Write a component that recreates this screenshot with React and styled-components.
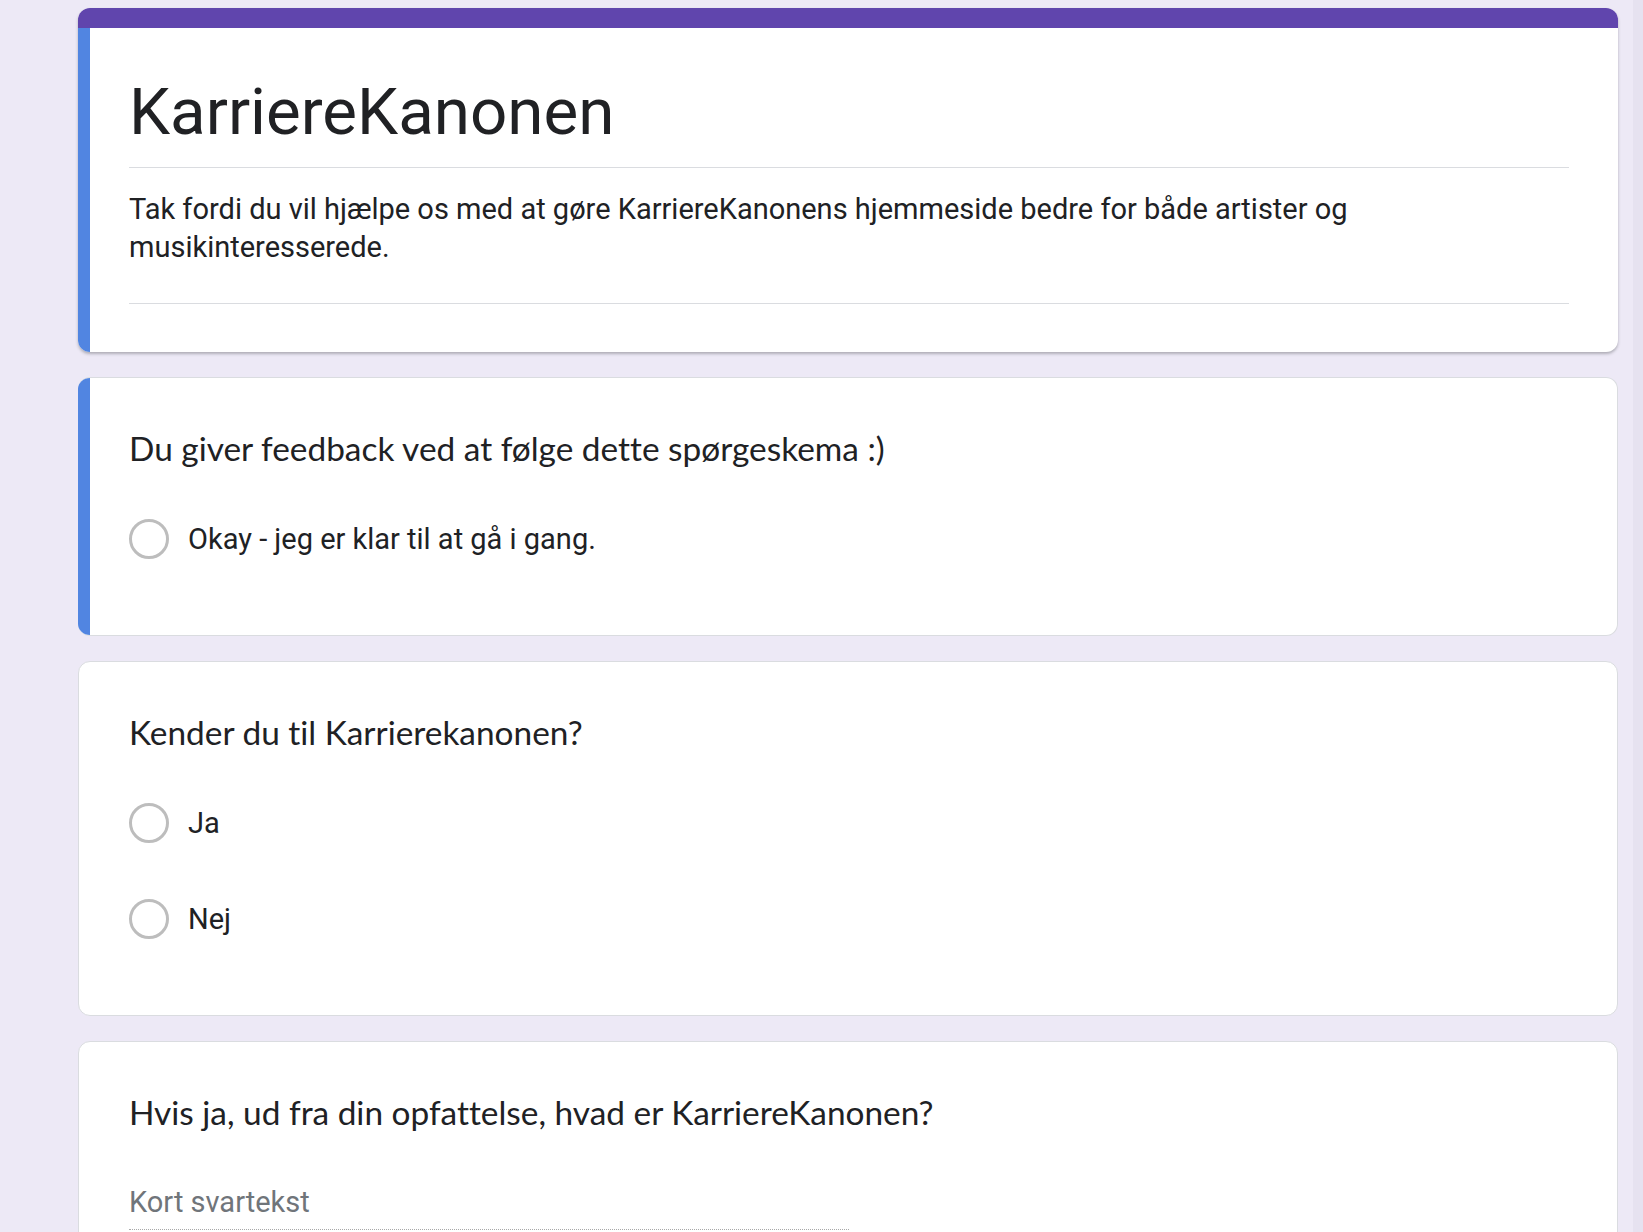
import React from "react";
import styled, { createGlobalStyle } from "styled-components";

const Global = createGlobalStyle`
  html, body { margin: 0; padding: 0; }
  body {
    background: #ede9f6;
    font-family: Roboto, "Liberation Sans", Arial, sans-serif;
    color: #202124;
    overflow: hidden;
  }
`;

const Page = styled.div`
  display: flex;
  min-height: 100vh;
`;

const Main = styled.main`
  flex: 1;
  display: flex;
  flex-direction: column;
  gap: 25px;
  padding: 8px 15px 40px 78px;
`;

const ScrollTrack = styled.div`
  width: 10px;
  flex: none;
  background: #e6e2f0;
`;

const Card = styled.section`
  background: #fff;
  border-radius: 12px;
  overflow: hidden;
  display: flex;
  flex-direction: ${(p) => (p.$column ? "column" : "row")};
  border: ${(p) => (p.$flat ? "none" : "1px solid #dadce0")};
  border-left: ${(p) => (p.$accent || p.$flat ? "none" : "1px solid #dadce0")};
  box-shadow: ${(p) => (p.$flat ? "0 2px 3px rgba(60,64,67,0.35)" : "none")};
`;

const TopBar = styled.div`
  height: 20px;
  background: #6045ad;
  flex: none;
`;

const Row = styled.div`
  display: flex;
  flex: 1;
`;

const AccentBar = styled.div`
  width: 12px;
  flex: none;
  background: #5185e1;
`;

const HeaderBody = styled.div`
  flex: 1;
  padding: 44px 49px 48px 39px;
  display: flex;
  flex-direction: column;
`;

const Title = styled.h1`
  margin: 0;
  font-family: Roboto, "Liberation Sans", sans-serif;
  font-weight: 400;
  font-size: 65.5px;
  line-height: 80px;
  color: #202124;
`;

const Divider = styled.hr`
  margin: ${(p) => p.$m || "0"};
  border: none;
  border-top: 1px solid #dadce0;
  height: 0;
`;

const Description = styled.p`
  margin: 0;
  max-width: 1260px;
  font-size: 29px;
  line-height: 38px;
  color: #202124;
`;

const QuestionBody = styled.div`
  flex: 1;
  display: flex;
  flex-direction: column;
  padding: 50px 49px ${(p) => p.$pb || "76px"} ${(p) => (p.$accent ? "39px" : "50px")};
`;

const Question = styled.h2`
  margin: 0 0 ${(p) => p.$mb || "51px"};
  font-family: Lato, "Noto Sans", sans-serif;
  font-weight: 400;
  font-size: 33.4px;
  line-height: 40px;
  font-variant-ligatures: none;
  color: #202124;
`;

const Options = styled.div`
  display: flex;
  flex-direction: column;
  gap: 56px;
`;

const OptionRow = styled.label`
  display: flex;
  align-items: center;
  gap: 19px;
  height: 40px;
  font-size: 29px;
  color: #202124;
`;

const Radio = styled.span`
  width: 40px;
  height: 40px;
  box-sizing: border-box;
  border-radius: 50%;
  border: 3px solid #bdbdbd;
  flex: none;
`;

const ShortInput = styled.div`
  width: 720px;
  font-size: 29px;
  line-height: 36px;
  color: #70757a;
  padding-bottom: 9px;
  border-bottom: 1px dotted #a8a8a8;
`;

function RadioQuestion({ accent, title, options }) {
  return (
    <Card $accent={accent}>
      {accent && <AccentBar />}
      <QuestionBody $accent={accent}>
        <Question>{title}</Question>
        <Options>
          {options.map((o) => (
            <OptionRow key={o}>
              <Radio />
              {o}
            </OptionRow>
          ))}
        </Options>
      </QuestionBody>
    </Card>
  );
}

export default function App() {
  return (
    <Page>
      <Global />
      <Main>
        <Card $flat $column>
          <TopBar />
          <Row>
            <AccentBar />
            <HeaderBody>
              <Title>KarriereKanonen</Title>
              <Divider $m="15px 0 22px" />
              <Description>
                Tak fordi du vil hjælpe os med at gøre KarriereKanonens hjemmeside bedre for både artister og musikinteresserede.
              </Description>
              <Divider $m="37px 0 0" />
            </HeaderBody>
          </Row>
        </Card>
        <RadioQuestion
          accent
          title="Du giver feedback ved at følge dette spørgeskema :)"
          options={["Okay - jeg er klar til at gå i gang."]}
        />
        <RadioQuestion title="Kender du til Karrierekanonen?" options={["Ja", "Nej"]} />
        <Card>
          <QuestionBody $pb="60px">
            <Question $mb="52px">Hvis ja, ud fra din opfattelse, hvad er KarriereKanonen?</Question>
            <ShortInput>Kort svartekst</ShortInput>
          </QuestionBody>
        </Card>
      </Main>
      <ScrollTrack />
    </Page>
  );
}
